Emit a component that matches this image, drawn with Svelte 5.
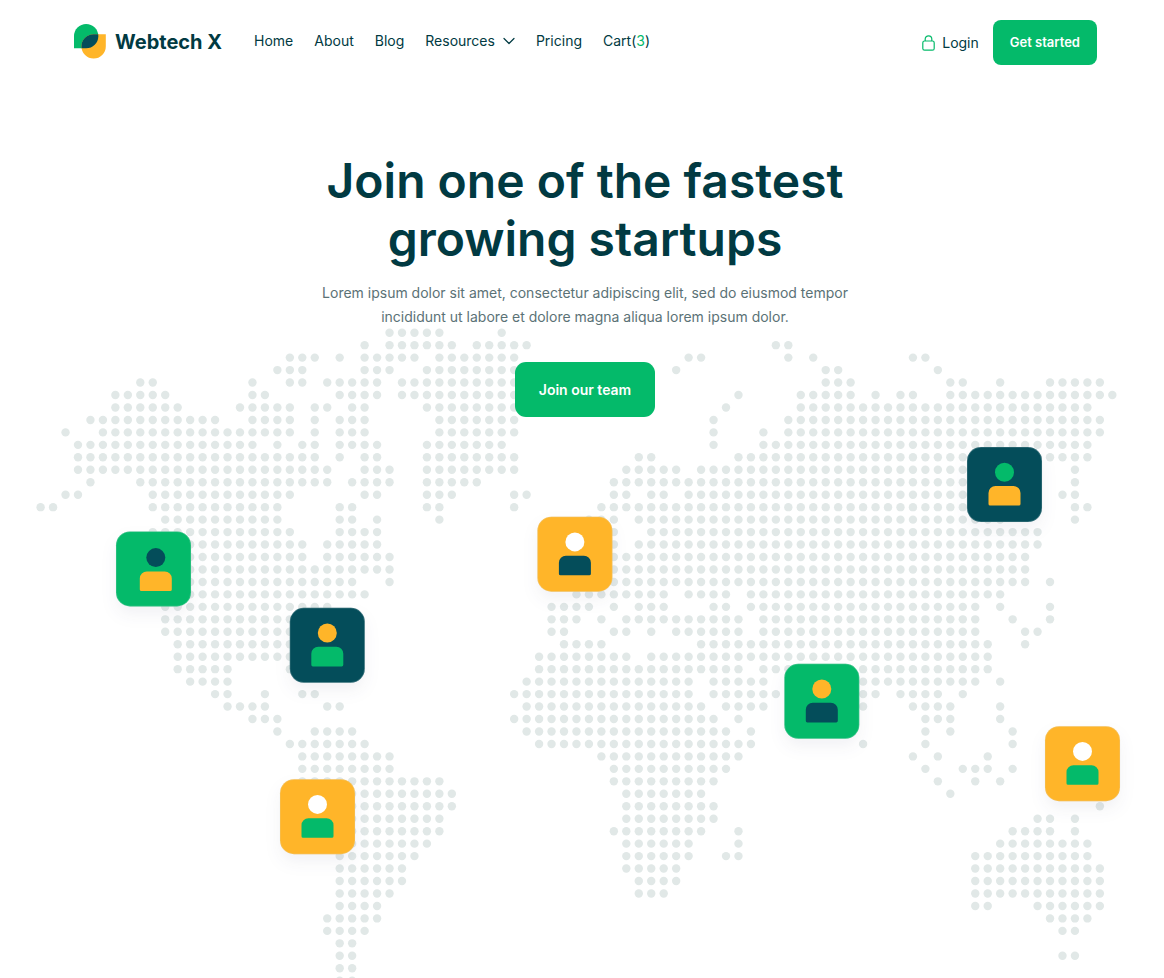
<script>
  const links = [
    { label: 'Home' },
    { label: 'About' },
    { label: 'Blog' },
    { label: 'Resources', menu: true },
    { label: 'Pricing' },
    { label: 'Cart', count: 3 }
  ];

  // Each row lists the runs of land dots, as "first-last" or a single column.
  const land = [
    '28-32 37',
    '26 28-33 35-39 59-60',
    '20-22 24 26-30 32-38 52-53 60 62 70-71',
    '19-21 26-28 31-38 51 63-64 72',
    '8-9 17 20-21 23-27 29-38 63-65 73-74 77 81-85',
    '6-10 17-18 24-27 29-38 56 61-65 67 69-70 73-86',
    '6-11 16-20 22-23 25-26 31-38 55 61-84',
    '4-14 17-20 22 24-26 32-38 54 60-85',
    '2 5-20 22 24-26 32-38 54 58 60-85',
    '3-17 19 21-22 24-27 31-37 54 58-84',
    '3-22 24 26-27 31-38 48-49 56-84',
    '3-23 26-28 31-38 47-51 53-79 83',
    '4 8-23 25-28 31-35 46-79 83',
    '2-3 9-20 26-27 31-33 38-39 46-47 49-50 52-79 82-83',
    '0-1 9-19 24-25 31-32 38 45-79 83-84',
    '10-19 24-25 27 32 44-46 48-77 83',
    '9-20 24-27 46 49-80',
    '10-21 23-27 46 48-80',
    '10-21 23-28 46-79',
    '10-28 46-79',
    '10-25 28 46-79 81',
    '10-26 43-50 52-55 57-77',
    '10-23 41-44 46 48-50 54-55 57-75 77 81',
    '10-20 41-43 45 47-56 58-75 78 81',
    '10-20 41-42 46-47 49 51-56 58-75 79-80',
    '11-20 42-45 53-76 79',
    '11-20 40-47 49-76',
    '11-15 20 40-56 58-76',
    '12-15 39-52 54-58 66-75 77',
    '14-15 18 21-22 38-52 54-59 66-67 69-72 74',
    '15-18 23-24 39-53 55-58 66 70-73 77',
    '17-19 38-54 56 71-73 77',
    '19 22-25 39-55 57 71 73 78',
    '20-26 40-57 66 71 78',
    '21-28 45-56 70 72 76',
    '21-28 46-55 71 74-76 78',
    '21-32 46-54 72 75 77',
    '24-33 47-53 73',
    '24-33 47-54 85',
    '24-32 47-54 80-81 83',
    '24-32 46-53 56 78-81 83',
    '24-31 47-52 56 77-84',
    '24-30 47-52 55-56 75-84',
    '24-29 47-51 75-85',
    '24-29 48-51 75-85',
    '24-28 48-50 75-85',
    '24-27 75-76 80-85',
    '23-27 81-84',
    '23-26 82-83',
    '24-25',
    '24-25 82-83',
    '24-25',
    '24-25'
  ];

  const pitch = 12.462;
  const dots = land.flatMap((row, r) =>
    row.split(' ').flatMap((run) => {
      const [first, last = first] = run.split('-').map(Number);
      return Array.from({ length: last - first + 1 }, (_, i) => ({
        x: 40.6 + (first + i) * pitch,
        y: 4.7 + r * pitch
      }));
    })
  );

  const green = '#04ba6a';
  const amber = '#ffb529';
  const teal = '#044d5a';
  const white = '#ffffff';

  // Top left corner of each tile, and the shift of the person inside it.
  const pins = [
    { x: 116, y: 203.4, tile: green, head: teal, body: amber, dx: 2.3, dy: 1 },
    { x: 289.8, y: 279.8, tile: teal, head: amber, body: green },
    { x: 537.4, y: 188.7, tile: amber, head: white, body: teal },
    { x: 967, y: 119, tile: teal, head: green, body: amber },
    { x: 784.3, y: 335.8, tile: green, head: amber, body: teal },
    { x: 1045, y: 398.2, tile: amber, head: white, body: green },
    { x: 280, y: 451.2, tile: amber, head: white, body: green }
  ];
</script>

<header>
  <a class="brand" href="#home">
    <svg width="32" height="35" viewBox="0 0 32 35" aria-hidden="true">
      <defs>
        <clipPath id="leaf">
          <path d="M0 24.3V12.15A12.15 12.15 0 1 1 12.15 24.3Z" />
        </clipPath>
      </defs>
      <path fill={green} d="M0 24.3V12.15A12.15 12.15 0 1 1 12.15 24.3Z" />
      <path fill={amber} d="M31.8 10.3V22.5A12.15 12.15 0 1 1 19.65 10.3Z" />
      <path fill={teal} clip-path="url(#leaf)" d="M31.8 10.3V22.5A12.15 12.15 0 1 1 19.65 10.3Z" />
    </svg>
    <span>Webtech X</span>
  </a>
  <nav>
    {#each links as link}
      <a href={'#' + link.label.toLowerCase()}>
        {link.label}{#if link.count}(<span class="count">{link.count}</span>){/if}
        {#if link.menu}
          <svg class="chevron" width="12" height="8" viewBox="0 0 12 8" aria-hidden="true">
            <path d="M1 1.5L6 6.5L11 1.5" fill="none" stroke="currentColor" stroke-width="1.2" stroke-linecap="round" stroke-linejoin="round" />
          </svg>
        {/if}
      </a>
    {/each}
  </nav>
  <div class="account">
    <a class="login" href="#login">
      <svg width="13" height="16" viewBox="0 0 13 16" fill="none" stroke={green} stroke-width="1.2" aria-hidden="true">
        <rect x="0.8" y="6" width="11.4" height="9.2" rx="1.8" />
        <path d="M3.2 6V4.1a3.3 3.3 0 0 1 6.6 0V6" />
      </svg>
      Login
    </a>
    <button class="small">Get started</button>
  </div>
</header>

<main>
  <svg class="map" viewBox="0 0 1164 650" aria-hidden="true">
    <defs>
      <filter id="shade" x="-50%" y="-50%" width="200%" height="200%" color-interpolation-filters="sRGB">
        <feDropShadow dx="0" dy="8" stdDeviation="8" flood-color="#1f2a5c" flood-opacity="0.06" />
      </filter>
    </defs>
    <g fill="#e1e8e7">
      {#each dots as dot}
        <circle cx={dot.x} cy={dot.y} r="4.2" />
      {/each}
    </g>
    {#each pins as pin}
      <g transform="translate({pin.x} {pin.y})">
        <rect width="75" height="75" rx="14" fill={pin.tile} filter="url(#shade)" />
        <rect x="0.2" y="0.2" width="74.6" height="74.6" rx="13.8" fill="none" stroke="#d5dedd" stroke-width="0.6" stroke-opacity="0.4" />
        <g transform="translate({pin.dx ?? 0} {pin.dy ?? 0})">
          <circle cx="37.5" cy="25.2" r="9.5" fill={pin.head} />
          <path fill={pin.body} d="M21.5 46a7 7 0 0 1 7-7h18a7 7 0 0 1 7 7v11a1.6 1.6 0 0 1-1.6 1.6h-28.8a1.6 1.6 0 0 1-1.6-1.6z" />
        </g>
      </g>
    {/each}
  </svg>
  <section class="intro">
    <h1>Join one of the fastest growing startups</h1>
    <p>Lorem ipsum dolor sit amet, consectetur adipiscing elit, sed do eiusmod tempor incididunt ut labore et dolore magna aliqua lorem ipsum dolor.</p>
    <button class="large">Join our team</button>
  </section>
</main>

<style>
  :global(body) {
    background: #fff;
    color: #013a42;
    font-family: Inter, "Open Sans", sans-serif;
  }

  header {
    display: flex;
    align-items: center;
    padding: 20px 67px 0 74px;
  }

  a {
    color: inherit;
    text-decoration: none;
  }

  svg {
    display: block;
    flex: none;
  }

  .brand {
    display: flex;
    align-items: center;
    gap: 9px;
    font-size: 20px;
    font-weight: 700;
    line-height: 32px;
    white-space: nowrap;
    margin-right: 32px;
    padding-bottom: 2px;
  }

  nav {
    display: flex;
    gap: 21px;
    font-size: 14px;
    line-height: 24px;
    padding-bottom: 4px;
  }

  nav a,
  .login {
    display: flex;
    align-items: center;
    white-space: nowrap;
  }

  .chevron {
    margin-left: 8px;
  }

  .count {
    color: #04ba6a;
  }

  .account {
    display: flex;
    align-items: center;
    gap: 14px;
    margin-left: auto;
  }

  .login {
    gap: 7px;
    font-size: 14px;
    line-height: 24px;
  }

  button {
    border: 0;
    background: #04ba6a;
    color: #fff;
    font-family: inherit;
    font-weight: 600;
    white-space: nowrap;
    cursor: pointer;
  }

  .small {
    padding: 0 17px;
    border-radius: 8px;
    font-size: 13px;
    line-height: 45px;
  }

  .large {
    padding: 0 24px;
    border-radius: 11px;
    font-size: 14px;
    line-height: 55px;
  }

  main {
    display: grid;
  }

  .map,
  .intro {
    grid-area: 1 / 1;
  }

  .map {
    width: 100%;
    margin-top: 263px;
  }

  .intro {
    z-index: 1;
    display: flex;
    flex-direction: column;
    align-items: center;
    justify-self: center;
    align-self: start;
    padding: 87px 24px 0 30px;
    text-align: center;
  }

  h1 {
    max-width: 560px;
    margin: 0;
    font-size: 48px;
    font-weight: 600;
    line-height: 58px;
  }

  p {
    max-width: 560px;
    margin: 13px 0 33px;
    color: #5b7276;
    font-size: 14px;
    line-height: 24px;
  }
</style>
